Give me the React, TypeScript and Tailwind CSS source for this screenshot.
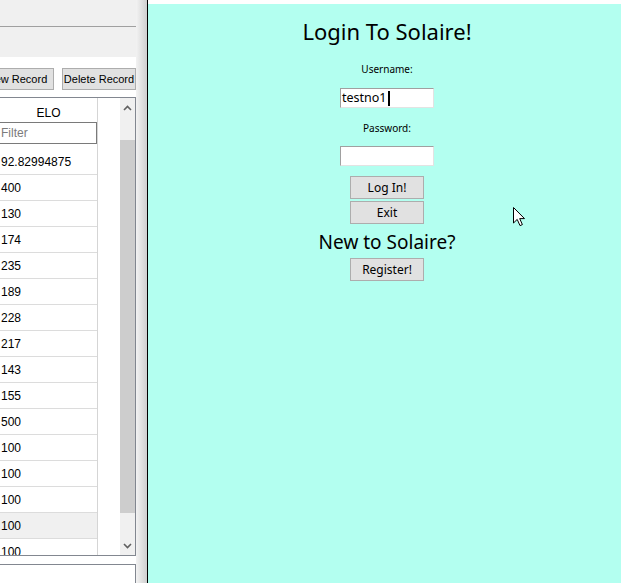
import React from 'react';

const rows = ['92.82994875', '400', '130', '174', '235', '189', '228', '217', '143', '155', '500', '100', '100', '100', '100', '100'];

function Chevron({ up }: { up?: boolean }) {
  return (
    <svg width="9" height="6" viewBox="0 0 9 6" className="block">
      <path d={up ? 'M1 5 L4.5 1.5 L8 5' : 'M1 1 L4.5 4.5 L8 1'} fill="none" stroke="#606060" strokeWidth="1.6" />
    </svg>
  );
}

function LeftPanel() {
  return (
    <div className="flex h-full shrink-0 font-['Liberation_Sans',Tahoma,sans-serif] text-[12px] text-black">
      <div className="flex h-full w-[136px] flex-col overflow-hidden bg-white">
        {/* menu / tab strip */}
        <div className="h-[27px] border-b border-[#a0a0a0] bg-[#f0f0f0]" />
        <div className="h-[30px] bg-[#f0f0f0]" />

        {/* toolbar */}
        <div className="flex h-[40px] items-center gap-[8px] pt-[4px]">
          <button className="-ml-[20px] h-[22px] w-[74px] shrink-0 whitespace-nowrap border border-[#adadad] bg-[#e1e1e1] px-0 text-[11px] leading-none">
            New Record
          </button>
          <button className="h-[22px] w-[74px] shrink-0 whitespace-nowrap border border-[#adadad] bg-[#e1e1e1] px-0 text-[11px] leading-none">
            Delete Record
          </button>
        </div>

        {/* table */}
        <div className="flex h-[459px] border-y border-r border-[#828790] bg-white">
          <div className="flex w-[98px] shrink-0 flex-col overflow-hidden border-r border-[#d5d5d5]">
            <div className="flex h-[24px] shrink-0 items-center justify-center pt-[6px]">ELO</div>
            <div className="flex h-[22px] shrink-0 items-center border border-[#7a7a7a] border-l-0 pl-[1px] text-[#7b7b7b]">Filter</div>
            <div className="h-[5px] shrink-0" />
            {rows.map((v, i) => (
              <div
                key={i}
                className={`flex h-[26px] shrink-0 items-center border-b border-[#dcdcdc] pl-[1px] ${i === 14 ? 'bg-[#f0f0f0]' : ''}`}
              >
                {v}
              </div>
            ))}
          </div>
          <div className="w-[22px] shrink-0" />
          <div className="flex w-[15px] shrink-0 flex-col bg-[#f0f0f0]">
            <div className="flex h-[17px] items-center justify-center pt-[2px]">
              <Chevron up />
            </div>
            <div className="h-[25px]" />
            <div className="h-[373px] bg-[#cdcdcd]" />
            <div className="flex-1" />
            <div className="flex h-[17px] items-center justify-center pb-[2px]">
              <Chevron />
            </div>
          </div>
        </div>

        <div className="h-[8px] shrink-0" />
        <div className="flex-1 border-t border-r border-[#828790] bg-white" />
      </div>
      <div className="h-full w-[11px] bg-gradient-to-r from-[#f3f3f3] to-[#cfcfcf]" />
      <div className="h-full w-px bg-black" />
    </div>
  );
}

function LoginPanel() {
  return (
    <div className="relative flex h-full flex-1 flex-col bg-white pt-[4px]">
      <div className="flex flex-1 flex-col items-center bg-[#b3fff0] pl-[5px] font-['Noto_Sans','Open_Sans',sans-serif] text-black">
        <div className="mt-[12px] flex h-[30px] items-center text-[22px] leading-none">Login To Solaire!</div>
        <div className="mt-[14px] flex h-[18px] items-center text-[10px] leading-none">Username:</div>
        <div className="mt-[10px] flex h-[20px] w-[94px] items-center border border-[#a0a0a0] border-b-[#e3e3e3] border-r-[#e3e3e3] bg-white pl-[1px] text-[12.5px] leading-none">
          testno1
          <span className="ml-px inline-block h-[15px] w-[2px] bg-black" />
        </div>
        <div className="mt-[11px] flex h-[18px] items-center text-[10px] leading-none">Password:</div>
        <div className="mt-[9px] h-[20px] w-[94px] border border-[#a0a0a0] border-b-[#e3e3e3] border-r-[#e3e3e3] bg-white" />
        <button className="mt-[10px] h-[23px] w-[74px] border border-[#adadad] bg-[#e1e1e1] text-[12px] leading-none">Log In!</button>
        <button className="mt-[2px] h-[23px] w-[74px] border border-[#adadad] bg-[#e1e1e1] text-[12px] leading-none">Exit</button>
        <div className="mt-[4px] flex h-[28px] items-center text-[19px] leading-none">New to Solaire?</div>
        <button className="mt-[2px] h-[23px] w-[74px] border border-[#adadad] bg-[#e1e1e1] text-[12px] leading-none">Register!</button>
      </div>

      {/* mouse pointer */}
      <svg className="absolute left-[365px] top-[207px]" width="13" height="20" viewBox="0 0 13 20">
        <path d="M0.5 0.5 L0.5 16 L4.2 12.4 L7 18.6 L9.4 17.6 L6.7 11.6 L11.5 11.6 Z" fill="white" stroke="black" strokeWidth="1" />
      </svg>
    </div>
  );
}

export default function App() {
  return (
    <div className="flex h-[583px] w-[621px] overflow-hidden">
      <LeftPanel />
      <LoginPanel />
    </div>
  );
}
